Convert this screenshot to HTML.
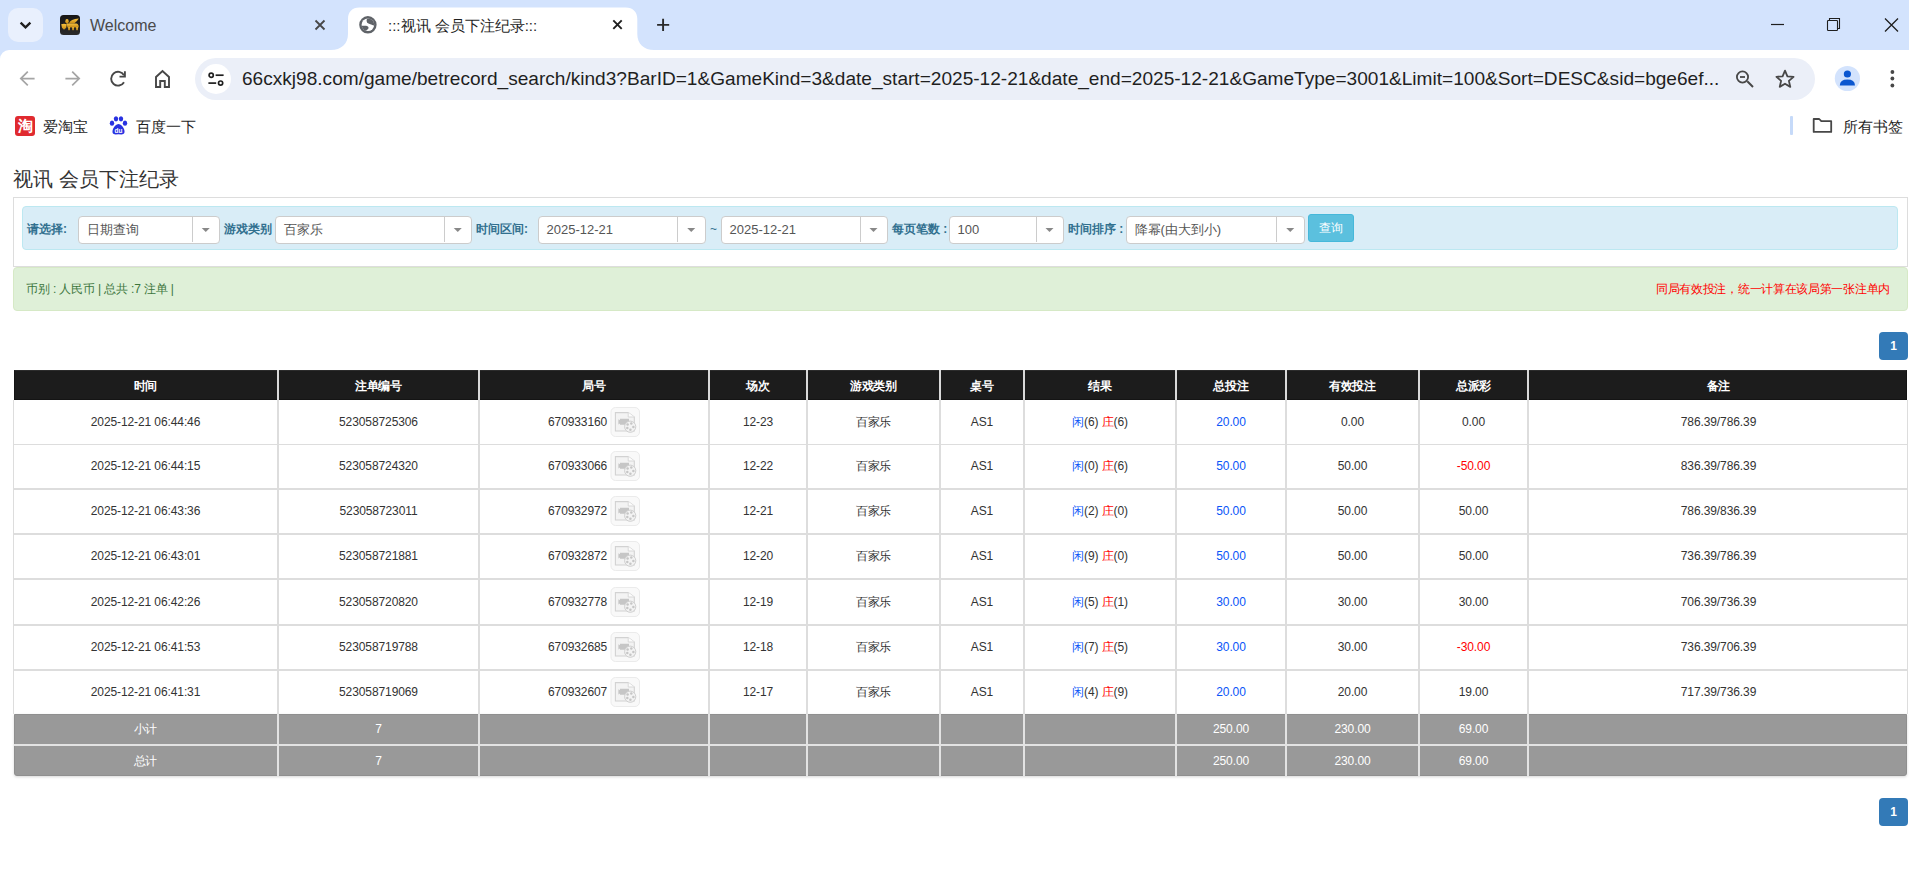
<!DOCTYPE html>
<html><head><meta charset="utf-8"><title>:::视讯 会员下注纪录:::</title>
<style>
*{box-sizing:border-box;margin:0;padding:0}
html,body{width:1909px;height:893px;overflow:hidden;background:#fff;font-family:"Liberation Sans",sans-serif;color:#333}
.a{position:absolute}
.t{position:absolute;white-space:nowrap}
svg{position:absolute;overflow:visible}
</style></head><body>

<div class="a" style="left:0;top:0;width:1909px;height:62px;background:#d3e3fd"></div>
<div class="a" style="left:8px;top:8px;width:35px;height:34px;border-radius:10px;background:#e9f0fd"></div>
<svg style="left:0;top:0" width="60" height="50"><path d="M20.6 22.6 L25.5 27.4 L30.4 22.6" fill="none" stroke="#1f1f1f" stroke-width="2.3" stroke-linecap="butt"/></svg>
<div class="a" style="left:60px;top:15px;width:20px;height:20px;border-radius:3.5px;background:linear-gradient(180deg,#161616,#2a2a2a)"></div>
<svg style="left:60px;top:15px" width="20" height="20"><defs><linearGradient id="gold" x1="0" y1="0" x2="0" y2="1"><stop offset="0" stop-color="#f7c340"/><stop offset="1" stop-color="#c78a12"/></linearGradient></defs>
<g fill="url(#gold)">
<path d="M1.2 9.2 Q4 8.2 6.8 9.2 L6.2 12.8 L4 14.8 L2 12.8 Z"/>
<ellipse cx="7" cy="6.2" rx="1.7" ry="2.3"/>
<path d="M8.8 8.6 Q10.5 4.2 18.8 3.6 Q17.2 6.4 14.2 8.4 Z"/>
<path d="M6.6 8.4 L16.5 8.6 Q19 9.6 18.6 12.4 L7.4 12.4 Z"/>
<rect x="8.2" y="12" width="1.7" height="3.2"/><rect x="12.2" y="12" width="1.7" height="3.2"/><rect x="16.2" y="12" width="1.7" height="3.2"/>
</g></svg>
<div class="t" style="left:90px;top:16px;font-size:16px;line-height:20px;color:#4a4a4a">Welcome</div>
<svg style="left:0;top:0" width="700" height="50"><path d="M315.5 20.5 L324.5 29.5 M324.5 20.5 L315.5 29.5" stroke="#474747" stroke-width="1.8"/></svg>
<svg style="left:0;top:0" width="700" height="50"><path d="M331 50 C341 50 348 44 348 34 L348 19 C348 12 352 7.4 359.5 7.4 L625.5 7.4 C633 7.4 637.3 12 637.3 19 L637.3 34 C637.3 44 644 50 654 50 Z" fill="#ffffff"/></svg>
<svg style="left:355px;top:12px" width="26" height="26" viewBox="0 0 26 26">
<defs><clipPath id="gc"><circle cx="12.9" cy="12.8" r="6.4"/></clipPath></defs>
<circle cx="12.9" cy="12.8" r="8.7" fill="#5f6368"/>
<circle cx="12.9" cy="12.8" r="6.3" fill="#ffffff"/>
<g clip-path="url(#gc)" fill="#5f6368">
<path d="M13.6 3 L13.6 4.8 Q11.4 7 11.6 9 Q11.8 11 13.5 11.6 L15.3 12.2 Q17 12.6 18 13.2 L19.6 13.8 L22 14 L22 3 Z"/>
<path d="M4 13.8 L11.2 13.8 Q13.6 14.2 13.6 15.8 Q13.6 17.4 11.8 18 Q10.9 18.5 10.9 19.5 L10.9 22 L4 22 Z"/>
</g></svg>
<div class="t" style="left:388px;top:16px;font-size:15px;line-height:20px;color:#1f1f1f">:::视讯 会员下注纪录:::</div>
<svg style="left:0;top:0" width="700" height="50"><path d="M613.3 20.3 L621.7 28.9 M621.7 20.3 L613.3 28.9" stroke="#1f1f1f" stroke-width="1.9"/></svg>
<svg style="left:0;top:0" width="700" height="50"><path d="M663.1 18.8 L663.1 30.9 M657.1 24.9 L669.2 24.9" stroke="#2a2a2a" stroke-width="1.9"/></svg>
<svg style="left:1700px;top:0" width="209" height="50">
<path d="M71 24.5 L84 24.5" stroke="#1f1f1f" stroke-width="1.2"/>
<rect x="127.5" y="20.5" width="10" height="10" rx="0.8" fill="none" stroke="#1f1f1f" stroke-width="1.1"/>
<path d="M129.5 20 L129.5 18.5 L139.5 18.5 L139.5 28.5 L138 28.5" fill="none" stroke="#1f1f1f" stroke-width="1.1"/>
<path d="M185 18.5 L198 31.5 M198 18.5 L185 31.5" stroke="#1f1f1f" stroke-width="1.3"/>
</svg>
<div class="a" style="left:0;top:50px;width:1909px;height:96px;background:#fff;border-top-left-radius:9px"></div>
<svg style="left:0;top:50px" width="200" height="56">
<path d="M34.6 28.6 L21.2 28.6 M27.8 21.6 L20.8 28.6 L27.8 35.4" fill="none" stroke="#a5a5a5" stroke-width="1.7"/>
<path d="M65.4 28.6 L78.8 28.6 M72.2 21.6 L79.2 28.6 L72.2 35.4" fill="none" stroke="#a5a5a5" stroke-width="1.7"/>
<path d="M124 32.2 A6.9 6.9 0 1 1 124 25.2" fill="none" stroke="#474747" stroke-width="1.9"/>
<path d="M124.9 21.2 L124.9 26.6 L119.5 26.6" fill="none" stroke="#474747" stroke-width="1.9"/>
<path d="M156 37 L156 27 L162.5 21 L169 27 L169 37 L164.8 37 L164.8 31 L160.2 31 L160.2 37 Z" fill="none" stroke="#474747" stroke-width="1.9" stroke-linejoin="miter"/>
</svg>
<div class="a" style="left:195px;top:58px;width:1620px;height:42px;border-radius:21px;background:#ebeff8"></div>
<div class="a" style="left:201px;top:64px;width:30px;height:30px;border-radius:15px;background:#fff"></div>
<svg style="left:201px;top:64px" width="30" height="30">
<circle cx="10.2" cy="11.2" r="2.1" fill="none" stroke="#1f1f1f" stroke-width="1.7"/>
<path d="M14.6 11.2 L22.6 11.2" stroke="#1f1f1f" stroke-width="1.7"/>
<circle cx="19.6" cy="19.1" r="2.1" fill="none" stroke="#1f1f1f" stroke-width="1.7"/>
<path d="M7.4 19.1 L15.2 19.1" stroke="#1f1f1f" stroke-width="1.7"/>
</svg>
<div class="t" id="url" style="left:242px;top:68px;font-size:19.08px;line-height:22px;color:#1f1f1f;transform-origin:0 0">66cxkj98.com/game/betrecord_search/kind3?BarID=1&amp;GameKind=3&amp;date_start=2025-12-21&amp;date_end=2025-12-21&amp;GameType=3001&amp;Limit=100&amp;Sort=DESC&amp;sid=bge6ef...</div>
<svg style="left:1700px;top:50px" width="209" height="56">
<circle cx="42.5" cy="27" r="5.6" fill="none" stroke="#474747" stroke-width="1.8"/>
<path d="M40 27 L45 27" stroke="#474747" stroke-width="1.8"/>
<path d="M47.3 31.3 L53 37" stroke="#474747" stroke-width="2"/>
<path d="M85 20.6 L87.41 26.28 L93.56 26.82 L88.9 30.87 L90.29 36.88 L85 33.7 L79.71 36.88 L81.1 30.87 L76.44 26.82 L82.59 26.28 Z" fill="none" stroke="#474747" stroke-width="1.8" stroke-linejoin="round"/>
<circle cx="147.4" cy="28.5" r="12.6" fill="#d3e3fd"/>
<circle cx="147.4" cy="24" r="3.6" fill="#0b57d0"/>
<path d="M139.8 35.5 Q140 29.6 147.4 29.6 Q154.8 29.6 155 35.5 Z" fill="#0b57d0"/>
<circle cx="192.4" cy="22" r="1.9" fill="#474747"/>
<circle cx="192.4" cy="28.5" r="1.9" fill="#474747"/>
<circle cx="192.4" cy="35.5" r="1.9" fill="#474747"/>
</svg>
<div class="a" style="left:15px;top:116px;width:20px;height:20px;border-radius:3px;background:#e02a2f"></div>
<div class="t" style="left:15px;top:116px;width:20px;height:20px;font-size:15px;line-height:20px;text-align:center;color:#fff;font-weight:bold">淘</div>
<div class="t" style="left:43px;top:116.5px;font-size:14.5px;letter-spacing:0.1px;line-height:20px;color:#1f1f1f">爱淘宝</div>
<svg style="left:108px;top:115px" width="20" height="22">
<ellipse cx="4" cy="8.2" rx="2.2" ry="2.6" fill="#2932e1"/>
<ellipse cx="8" cy="3.8" rx="2.2" ry="2.6" fill="#2932e1"/>
<ellipse cx="13" cy="3.8" rx="2.2" ry="2.6" fill="#2932e1"/>
<ellipse cx="17" cy="8.2" rx="2.2" ry="2.6" fill="#2932e1"/>
<path d="M10.5 9 Q14 9.5 16 14 Q18 19 13.5 19.5 Q10.5 19 7.5 19.5 Q3 19 5 14 Q7 9.5 10.5 9Z" fill="#2932e1"/>
<text x="10.5" y="18.2" font-size="6.5" font-family="Liberation Sans" font-weight="bold" fill="#fff" text-anchor="middle">du</text>
</svg>
<div class="t" style="left:135.5px;top:116.5px;font-size:14.5px;letter-spacing:0.1px;line-height:20px;color:#1f1f1f">百度一下</div>
<div class="a" style="left:1790px;top:116px;width:2.5px;height:19px;background:#c6daf9;border-radius:1px"></div>
<svg style="left:1810px;top:115px" width="26" height="22">
<path d="M3.7 4 L9.2 4 L11.3 6.2 L21.2 6.2 L21.2 16.9 L3.7 16.9 Z" fill="none" stroke="#474747" stroke-width="1.8" stroke-linejoin="round"/>
</svg>
<div class="t" style="left:1843px;top:116.5px;font-size:14.5px;letter-spacing:0.1px;line-height:20px;color:#1f1f1f">所有书签</div>
<div class="t" style="left:13px;top:167px;font-size:20px;line-height:24px;color:#333">视讯 会员下注纪录</div>
<div class="a" style="left:13px;top:197px;width:1895px;height:70px;border:1px solid #dddddd;background:#fff"></div>
<div class="a" style="left:22px;top:206px;width:1876px;height:44px;border:1px solid #bce8f1;border-radius:4px;background:#d9edf7"></div>
<div class="t" style="left:27px;top:221px;font-size:12px;font-weight:bold;color:#31708f;line-height:16px">请选择:</div>
<div class="a" style="left:77.5px;top:216px;width:142.0px;height:27.5px;border:1px solid #cccccc;border-radius:4px;background:#fff"></div>
<div class="a" style="left:192px;top:217px;width:1px;height:25px;background:#cccccc"></div>
<svg style="left:0;top:0" width="1" height="1"><path d="M201.75 228 L209.75 228 L205.75 232 Z" fill="#888"/></svg>
<div class="t" style="left:86.5px;top:222px;font-size:13px;line-height:16px;color:#555">日期查询</div>
<div class="t" style="left:223.5px;top:221px;font-size:12px;font-weight:bold;color:#31708f;line-height:16px">游戏类别</div>
<div class="a" style="left:274.5px;top:216px;width:197.0px;height:27.5px;border:1px solid #cccccc;border-radius:4px;background:#fff"></div>
<div class="a" style="left:444px;top:217px;width:1px;height:25px;background:#cccccc"></div>
<svg style="left:0;top:0" width="1" height="1"><path d="M453.75 228 L461.75 228 L457.75 232 Z" fill="#888"/></svg>
<div class="t" style="left:283.5px;top:222px;font-size:13px;line-height:16px;color:#555">百家乐</div>
<div class="t" style="left:476px;top:221px;font-size:12px;font-weight:bold;color:#31708f;line-height:16px">时间区间:</div>
<div class="a" style="left:537.5px;top:216px;width:168.0px;height:27.5px;border:1px solid #cccccc;border-radius:4px;background:#fff"></div>
<div class="a" style="left:677px;top:217px;width:1px;height:25px;background:#cccccc"></div>
<svg style="left:0;top:0" width="1" height="1"><path d="M687.25 228 L695.25 228 L691.25 232 Z" fill="#888"/></svg>
<div class="t" style="left:546.5px;top:222px;font-size:13px;line-height:16px;color:#555">2025-12-21</div>
<div class="t" style="left:710px;top:221px;font-size:12px;line-height:16px;color:#31708f">~</div>
<div class="a" style="left:720.5px;top:216px;width:167.0px;height:27.5px;border:1px solid #cccccc;border-radius:4px;background:#fff"></div>
<div class="a" style="left:859.5px;top:217px;width:1px;height:25px;background:#cccccc"></div>
<svg style="left:0;top:0" width="1" height="1"><path d="M869.5 228 L877.5 228 L873.5 232 Z" fill="#888"/></svg>
<div class="t" style="left:729.5px;top:222px;font-size:13px;line-height:16px;color:#555">2025-12-21</div>
<div class="t" style="left:892px;top:221px;font-size:12px;font-weight:bold;color:#31708f;line-height:16px">每页笔数 :</div>
<div class="a" style="left:948.5px;top:216px;width:115.0px;height:27.5px;border:1px solid #cccccc;border-radius:4px;background:#fff"></div>
<div class="a" style="left:1035.5px;top:217px;width:1px;height:25px;background:#cccccc"></div>
<svg style="left:0;top:0" width="1" height="1"><path d="M1045.5 228 L1053.5 228 L1049.5 232 Z" fill="#888"/></svg>
<div class="t" style="left:957.5px;top:222px;font-size:13px;line-height:16px;color:#555">100</div>
<div class="t" style="left:1068px;top:221px;font-size:12px;font-weight:bold;color:#31708f;line-height:16px">时间排序 :</div>
<div class="a" style="left:1125.5px;top:216px;width:179.0px;height:27.5px;border:1px solid #cccccc;border-radius:4px;background:#fff"></div>
<div class="a" style="left:1276px;top:217px;width:1px;height:25px;background:#cccccc"></div>
<svg style="left:0;top:0" width="1" height="1"><path d="M1286.25 228 L1294.25 228 L1290.25 232 Z" fill="#888"/></svg>
<div class="t" style="left:1134.5px;top:222px;font-size:13px;line-height:16px;color:#555">降幂(由大到小)</div>
<div class="a" style="left:1308px;top:214px;width:46px;height:28px;border:1px solid #46b8da;border-radius:3px;background:#5bc0de"></div>
<div class="t" style="left:1308px;top:220px;width:46px;text-align:center;font-size:12px;line-height:16px;color:#fff">查询</div>
<div class="a" style="left:13px;top:267px;width:1895px;height:44px;border:1px solid #d6e9c6;border-radius:4px;background:#dff0d8"></div>
<div class="t" style="left:26px;top:281px;font-size:12px;letter-spacing:-0.15px;line-height:16px;color:#3c763d">币别 : 人民币 | 总共 :7 注单 |</div>
<div class="t" style="right:19px;top:281px;font-size:12px;letter-spacing:-0.3px;line-height:16px;color:#ff0000">同局有效投注，统一计算在该局第一张注单内</div>
<div class="a" style="left:1879px;top:332px;width:29px;height:28px;border-radius:4px;background:#337ab7"></div>
<div class="t" style="left:1879px;top:338px;width:29px;text-align:center;font-size:12px;font-weight:bold;line-height:16px;color:#fff">1</div>
<div class="a" style="left:1879px;top:798px;width:29px;height:28px;border-radius:4px;background:#337ab7"></div>
<div class="t" style="left:1879px;top:804px;width:29px;text-align:center;font-size:12px;font-weight:bold;line-height:16px;color:#fff">1</div>
<div class="a" style="left:13px;top:370px;width:1895px;height:344px;background:#fff"></div>
<div class="a" style="left:14px;top:370px;width:1893px;height:30px;background:#1c1c1c;border:1px solid #141414;border-top-color:#2c2c2c"></div>
<div class="a" style="left:14px;top:714px;width:1893px;height:62px;background:#999999;border:1px solid #8f8f8f;border-radius:0 0 3px 3px;box-shadow:0 1px 3px rgba(0,0,0,.16)"></div>
<div class="a" style="left:14px;top:744px;width:1893px;height:2px;background:#e3e3e3"></div>
<div class="a" style="left:13px;top:444px;width:1895px;height:1px;background:#dddddd"></div>
<div class="a" style="left:13px;top:488px;width:1895px;height:2px;background:#dddddd"></div>
<div class="a" style="left:13px;top:533px;width:1895px;height:2px;background:#dddddd"></div>
<div class="a" style="left:13px;top:578px;width:1895px;height:2px;background:#dddddd"></div>
<div class="a" style="left:13px;top:624px;width:1895px;height:2px;background:#dddddd"></div>
<div class="a" style="left:13px;top:669px;width:1895px;height:2px;background:#dddddd"></div>
<div class="a" style="left:13px;top:400px;width:1px;height:314px;background:#dddddd"></div>
<div class="a" style="left:1907px;top:400px;width:1px;height:314px;background:#dddddd"></div>
<div class="a" style="left:277px;top:370px;width:2px;height:30px;background:#d9d9d9"></div>
<div class="a" style="left:277px;top:400px;width:2px;height:314px;background:#dddddd"></div>
<div class="a" style="left:277px;top:714px;width:2px;height:62px;background:#e3e3e3"></div>
<div class="a" style="left:478px;top:370px;width:2px;height:30px;background:#d9d9d9"></div>
<div class="a" style="left:478px;top:400px;width:2px;height:314px;background:#dddddd"></div>
<div class="a" style="left:478px;top:714px;width:2px;height:62px;background:#e3e3e3"></div>
<div class="a" style="left:708px;top:370px;width:2px;height:30px;background:#d9d9d9"></div>
<div class="a" style="left:708px;top:400px;width:2px;height:314px;background:#dddddd"></div>
<div class="a" style="left:708px;top:714px;width:2px;height:62px;background:#e3e3e3"></div>
<div class="a" style="left:806px;top:370px;width:2px;height:30px;background:#d9d9d9"></div>
<div class="a" style="left:806px;top:400px;width:2px;height:314px;background:#dddddd"></div>
<div class="a" style="left:806px;top:714px;width:2px;height:62px;background:#e3e3e3"></div>
<div class="a" style="left:939px;top:370px;width:2px;height:30px;background:#d9d9d9"></div>
<div class="a" style="left:939px;top:400px;width:2px;height:314px;background:#dddddd"></div>
<div class="a" style="left:939px;top:714px;width:2px;height:62px;background:#e3e3e3"></div>
<div class="a" style="left:1023px;top:370px;width:2px;height:30px;background:#d9d9d9"></div>
<div class="a" style="left:1023px;top:400px;width:2px;height:314px;background:#dddddd"></div>
<div class="a" style="left:1023px;top:714px;width:2px;height:62px;background:#e3e3e3"></div>
<div class="a" style="left:1175px;top:370px;width:2px;height:30px;background:#d9d9d9"></div>
<div class="a" style="left:1175px;top:400px;width:2px;height:314px;background:#dddddd"></div>
<div class="a" style="left:1175px;top:714px;width:2px;height:62px;background:#e3e3e3"></div>
<div class="a" style="left:1285px;top:370px;width:2px;height:30px;background:#d9d9d9"></div>
<div class="a" style="left:1285px;top:400px;width:2px;height:314px;background:#dddddd"></div>
<div class="a" style="left:1285px;top:714px;width:2px;height:62px;background:#e3e3e3"></div>
<div class="a" style="left:1418px;top:370px;width:2px;height:30px;background:#d9d9d9"></div>
<div class="a" style="left:1418px;top:400px;width:2px;height:314px;background:#dddddd"></div>
<div class="a" style="left:1418px;top:714px;width:2px;height:62px;background:#e3e3e3"></div>
<div class="a" style="left:1527px;top:370px;width:2px;height:30px;background:#d9d9d9"></div>
<div class="a" style="left:1527px;top:400px;width:2px;height:314px;background:#dddddd"></div>
<div class="a" style="left:1527px;top:714px;width:2px;height:62px;background:#e3e3e3"></div>
<div class="t" style="left:14px;top:378px;width:263px;text-align:center;font-size:12px;letter-spacing:-0.1px;line-height:16px;color:#fff;font-weight:bold">时间</div>
<div class="t" style="left:279px;top:378px;width:199px;text-align:center;font-size:12px;letter-spacing:-0.1px;line-height:16px;color:#fff;font-weight:bold">注单编号</div>
<div class="t" style="left:480px;top:378px;width:228px;text-align:center;font-size:12px;letter-spacing:-0.1px;line-height:16px;color:#fff;font-weight:bold">局号</div>
<div class="t" style="left:710px;top:378px;width:96px;text-align:center;font-size:12px;letter-spacing:-0.1px;line-height:16px;color:#fff;font-weight:bold">场次</div>
<div class="t" style="left:808px;top:378px;width:131px;text-align:center;font-size:12px;letter-spacing:-0.1px;line-height:16px;color:#fff;font-weight:bold">游戏类别</div>
<div class="t" style="left:941px;top:378px;width:82px;text-align:center;font-size:12px;letter-spacing:-0.1px;line-height:16px;color:#fff;font-weight:bold">桌号</div>
<div class="t" style="left:1025px;top:378px;width:150px;text-align:center;font-size:12px;letter-spacing:-0.1px;line-height:16px;color:#fff;font-weight:bold">结果</div>
<div class="t" style="left:1177px;top:378px;width:108px;text-align:center;font-size:12px;letter-spacing:-0.1px;line-height:16px;color:#fff;font-weight:bold">总投注</div>
<div class="t" style="left:1287px;top:378px;width:131px;text-align:center;font-size:12px;letter-spacing:-0.1px;line-height:16px;color:#fff;font-weight:bold">有效投注</div>
<div class="t" style="left:1420px;top:378px;width:107px;text-align:center;font-size:12px;letter-spacing:-0.1px;line-height:16px;color:#fff;font-weight:bold">总派彩</div>
<div class="t" style="left:1529px;top:378px;width:379px;text-align:center;font-size:12px;letter-spacing:-0.1px;line-height:16px;color:#fff;font-weight:bold">备注</div>
<div class="t" style="left:14px;top:414px;width:263px;text-align:center;font-size:12px;letter-spacing:-0.1px;line-height:16px;">2025-12-21 06:44:46</div>
<div class="t" style="left:279px;top:414px;width:199px;text-align:center;font-size:12px;letter-spacing:-0.1px;line-height:16px;">523058725306</div>
<div class="t" style="left:548px;top:414px;font-size:12px;letter-spacing:-0.1px;line-height:16px">670933160</div>
<div class="a" style="left:611px;top:407px;width:30px;height:30px"><svg width="30" height="30" viewBox="0 0 30 30" style="left:0;top:0">
<rect x="0" y="0.5" width="28.5" height="29" rx="4.5" fill="#f9f9f9" stroke="#ebebeb" stroke-width="1"/>
<path d="M4.4 5.6 L17.2 5.6 L23.3 10 L23.3 24 L4.4 24 Z" fill="#f3f3f3" stroke="#d2d2d2" stroke-width="1.1"/>
<path d="M17.2 5.6 L17.2 10 L23.3 10" fill="#fcfcfc" stroke="#d8d8d8" stroke-width="1"/>
<path d="M7.4 12.3 L9 13.3 L9 11.8 L18 11.8 L18 17.8 L9 17.8 L9 16.6 L7.4 17.6 Z" fill="#c6c6c6"/>
<circle cx="19.2" cy="19.7" r="5.6" fill="#f3f3f3" stroke="#cfcfcf" stroke-width="1"/>
<circle cx="16.6" cy="17.6" r="1.25" fill="#c6c6c6"/><circle cx="20.3" cy="16.5" r="1.25" fill="#c6c6c6"/>
<circle cx="22.4" cy="19.9" r="1.25" fill="#c6c6c6"/><circle cx="19.4" cy="22.7" r="1.25" fill="#c6c6c6"/><circle cx="16.3" cy="20.9" r="1.25" fill="#c6c6c6"/>
</svg></div>
<div class="t" style="left:710px;top:414px;width:96px;text-align:center;font-size:12px;letter-spacing:-0.1px;line-height:16px;">12-23</div>
<div class="t" style="left:808px;top:414px;width:131px;text-align:center;font-size:12px;letter-spacing:-0.1px;line-height:16px;">百家乐</div>
<div class="t" style="left:941px;top:414px;width:82px;text-align:center;font-size:12px;letter-spacing:-0.1px;line-height:16px;">AS1</div>
<div class="t" style="left:1025px;top:414px;width:150px;text-align:center;font-size:12px;letter-spacing:-0.1px;line-height:16px;"><span style="color:#0a55f8">闲</span>(6) <span style="color:#ff0000">庄</span>(6)</div>
<div class="t" style="left:1177px;top:414px;width:108px;text-align:center;font-size:12px;letter-spacing:-0.1px;line-height:16px;color:#0a55f8">20.00</div>
<div class="t" style="left:1287px;top:414px;width:131px;text-align:center;font-size:12px;letter-spacing:-0.1px;line-height:16px;">0.00</div>
<div class="t" style="left:1420px;top:414px;width:107px;text-align:center;font-size:12px;letter-spacing:-0.1px;line-height:16px;">0.00</div>
<div class="t" style="left:1529px;top:414px;width:379px;text-align:center;font-size:12px;letter-spacing:-0.1px;line-height:16px;">786.39/786.39</div>
<div class="t" style="left:14px;top:458px;width:263px;text-align:center;font-size:12px;letter-spacing:-0.1px;line-height:16px;">2025-12-21 06:44:15</div>
<div class="t" style="left:279px;top:458px;width:199px;text-align:center;font-size:12px;letter-spacing:-0.1px;line-height:16px;">523058724320</div>
<div class="t" style="left:548px;top:458px;font-size:12px;letter-spacing:-0.1px;line-height:16px">670933066</div>
<div class="a" style="left:611px;top:451px;width:30px;height:30px"><svg width="30" height="30" viewBox="0 0 30 30" style="left:0;top:0">
<rect x="0" y="0.5" width="28.5" height="29" rx="4.5" fill="#f9f9f9" stroke="#ebebeb" stroke-width="1"/>
<path d="M4.4 5.6 L17.2 5.6 L23.3 10 L23.3 24 L4.4 24 Z" fill="#f3f3f3" stroke="#d2d2d2" stroke-width="1.1"/>
<path d="M17.2 5.6 L17.2 10 L23.3 10" fill="#fcfcfc" stroke="#d8d8d8" stroke-width="1"/>
<path d="M7.4 12.3 L9 13.3 L9 11.8 L18 11.8 L18 17.8 L9 17.8 L9 16.6 L7.4 17.6 Z" fill="#c6c6c6"/>
<circle cx="19.2" cy="19.7" r="5.6" fill="#f3f3f3" stroke="#cfcfcf" stroke-width="1"/>
<circle cx="16.6" cy="17.6" r="1.25" fill="#c6c6c6"/><circle cx="20.3" cy="16.5" r="1.25" fill="#c6c6c6"/>
<circle cx="22.4" cy="19.9" r="1.25" fill="#c6c6c6"/><circle cx="19.4" cy="22.7" r="1.25" fill="#c6c6c6"/><circle cx="16.3" cy="20.9" r="1.25" fill="#c6c6c6"/>
</svg></div>
<div class="t" style="left:710px;top:458px;width:96px;text-align:center;font-size:12px;letter-spacing:-0.1px;line-height:16px;">12-22</div>
<div class="t" style="left:808px;top:458px;width:131px;text-align:center;font-size:12px;letter-spacing:-0.1px;line-height:16px;">百家乐</div>
<div class="t" style="left:941px;top:458px;width:82px;text-align:center;font-size:12px;letter-spacing:-0.1px;line-height:16px;">AS1</div>
<div class="t" style="left:1025px;top:458px;width:150px;text-align:center;font-size:12px;letter-spacing:-0.1px;line-height:16px;"><span style="color:#0a55f8">闲</span>(0) <span style="color:#ff0000">庄</span>(6)</div>
<div class="t" style="left:1177px;top:458px;width:108px;text-align:center;font-size:12px;letter-spacing:-0.1px;line-height:16px;color:#0a55f8">50.00</div>
<div class="t" style="left:1287px;top:458px;width:131px;text-align:center;font-size:12px;letter-spacing:-0.1px;line-height:16px;">50.00</div>
<div class="t" style="left:1420px;top:458px;width:107px;text-align:center;font-size:12px;letter-spacing:-0.1px;line-height:16px;color:#ff0000">-50.00</div>
<div class="t" style="left:1529px;top:458px;width:379px;text-align:center;font-size:12px;letter-spacing:-0.1px;line-height:16px;">836.39/786.39</div>
<div class="t" style="left:14px;top:503px;width:263px;text-align:center;font-size:12px;letter-spacing:-0.1px;line-height:16px;">2025-12-21 06:43:36</div>
<div class="t" style="left:279px;top:503px;width:199px;text-align:center;font-size:12px;letter-spacing:-0.1px;line-height:16px;">523058723011</div>
<div class="t" style="left:548px;top:503px;font-size:12px;letter-spacing:-0.1px;line-height:16px">670932972</div>
<div class="a" style="left:611px;top:496px;width:30px;height:30px"><svg width="30" height="30" viewBox="0 0 30 30" style="left:0;top:0">
<rect x="0" y="0.5" width="28.5" height="29" rx="4.5" fill="#f9f9f9" stroke="#ebebeb" stroke-width="1"/>
<path d="M4.4 5.6 L17.2 5.6 L23.3 10 L23.3 24 L4.4 24 Z" fill="#f3f3f3" stroke="#d2d2d2" stroke-width="1.1"/>
<path d="M17.2 5.6 L17.2 10 L23.3 10" fill="#fcfcfc" stroke="#d8d8d8" stroke-width="1"/>
<path d="M7.4 12.3 L9 13.3 L9 11.8 L18 11.8 L18 17.8 L9 17.8 L9 16.6 L7.4 17.6 Z" fill="#c6c6c6"/>
<circle cx="19.2" cy="19.7" r="5.6" fill="#f3f3f3" stroke="#cfcfcf" stroke-width="1"/>
<circle cx="16.6" cy="17.6" r="1.25" fill="#c6c6c6"/><circle cx="20.3" cy="16.5" r="1.25" fill="#c6c6c6"/>
<circle cx="22.4" cy="19.9" r="1.25" fill="#c6c6c6"/><circle cx="19.4" cy="22.7" r="1.25" fill="#c6c6c6"/><circle cx="16.3" cy="20.9" r="1.25" fill="#c6c6c6"/>
</svg></div>
<div class="t" style="left:710px;top:503px;width:96px;text-align:center;font-size:12px;letter-spacing:-0.1px;line-height:16px;">12-21</div>
<div class="t" style="left:808px;top:503px;width:131px;text-align:center;font-size:12px;letter-spacing:-0.1px;line-height:16px;">百家乐</div>
<div class="t" style="left:941px;top:503px;width:82px;text-align:center;font-size:12px;letter-spacing:-0.1px;line-height:16px;">AS1</div>
<div class="t" style="left:1025px;top:503px;width:150px;text-align:center;font-size:12px;letter-spacing:-0.1px;line-height:16px;"><span style="color:#0a55f8">闲</span>(2) <span style="color:#ff0000">庄</span>(0)</div>
<div class="t" style="left:1177px;top:503px;width:108px;text-align:center;font-size:12px;letter-spacing:-0.1px;line-height:16px;color:#0a55f8">50.00</div>
<div class="t" style="left:1287px;top:503px;width:131px;text-align:center;font-size:12px;letter-spacing:-0.1px;line-height:16px;">50.00</div>
<div class="t" style="left:1420px;top:503px;width:107px;text-align:center;font-size:12px;letter-spacing:-0.1px;line-height:16px;">50.00</div>
<div class="t" style="left:1529px;top:503px;width:379px;text-align:center;font-size:12px;letter-spacing:-0.1px;line-height:16px;">786.39/836.39</div>
<div class="t" style="left:14px;top:548px;width:263px;text-align:center;font-size:12px;letter-spacing:-0.1px;line-height:16px;">2025-12-21 06:43:01</div>
<div class="t" style="left:279px;top:548px;width:199px;text-align:center;font-size:12px;letter-spacing:-0.1px;line-height:16px;">523058721881</div>
<div class="t" style="left:548px;top:548px;font-size:12px;letter-spacing:-0.1px;line-height:16px">670932872</div>
<div class="a" style="left:611px;top:541px;width:30px;height:30px"><svg width="30" height="30" viewBox="0 0 30 30" style="left:0;top:0">
<rect x="0" y="0.5" width="28.5" height="29" rx="4.5" fill="#f9f9f9" stroke="#ebebeb" stroke-width="1"/>
<path d="M4.4 5.6 L17.2 5.6 L23.3 10 L23.3 24 L4.4 24 Z" fill="#f3f3f3" stroke="#d2d2d2" stroke-width="1.1"/>
<path d="M17.2 5.6 L17.2 10 L23.3 10" fill="#fcfcfc" stroke="#d8d8d8" stroke-width="1"/>
<path d="M7.4 12.3 L9 13.3 L9 11.8 L18 11.8 L18 17.8 L9 17.8 L9 16.6 L7.4 17.6 Z" fill="#c6c6c6"/>
<circle cx="19.2" cy="19.7" r="5.6" fill="#f3f3f3" stroke="#cfcfcf" stroke-width="1"/>
<circle cx="16.6" cy="17.6" r="1.25" fill="#c6c6c6"/><circle cx="20.3" cy="16.5" r="1.25" fill="#c6c6c6"/>
<circle cx="22.4" cy="19.9" r="1.25" fill="#c6c6c6"/><circle cx="19.4" cy="22.7" r="1.25" fill="#c6c6c6"/><circle cx="16.3" cy="20.9" r="1.25" fill="#c6c6c6"/>
</svg></div>
<div class="t" style="left:710px;top:548px;width:96px;text-align:center;font-size:12px;letter-spacing:-0.1px;line-height:16px;">12-20</div>
<div class="t" style="left:808px;top:548px;width:131px;text-align:center;font-size:12px;letter-spacing:-0.1px;line-height:16px;">百家乐</div>
<div class="t" style="left:941px;top:548px;width:82px;text-align:center;font-size:12px;letter-spacing:-0.1px;line-height:16px;">AS1</div>
<div class="t" style="left:1025px;top:548px;width:150px;text-align:center;font-size:12px;letter-spacing:-0.1px;line-height:16px;"><span style="color:#0a55f8">闲</span>(9) <span style="color:#ff0000">庄</span>(0)</div>
<div class="t" style="left:1177px;top:548px;width:108px;text-align:center;font-size:12px;letter-spacing:-0.1px;line-height:16px;color:#0a55f8">50.00</div>
<div class="t" style="left:1287px;top:548px;width:131px;text-align:center;font-size:12px;letter-spacing:-0.1px;line-height:16px;">50.00</div>
<div class="t" style="left:1420px;top:548px;width:107px;text-align:center;font-size:12px;letter-spacing:-0.1px;line-height:16px;">50.00</div>
<div class="t" style="left:1529px;top:548px;width:379px;text-align:center;font-size:12px;letter-spacing:-0.1px;line-height:16px;">736.39/786.39</div>
<div class="t" style="left:14px;top:594px;width:263px;text-align:center;font-size:12px;letter-spacing:-0.1px;line-height:16px;">2025-12-21 06:42:26</div>
<div class="t" style="left:279px;top:594px;width:199px;text-align:center;font-size:12px;letter-spacing:-0.1px;line-height:16px;">523058720820</div>
<div class="t" style="left:548px;top:594px;font-size:12px;letter-spacing:-0.1px;line-height:16px">670932778</div>
<div class="a" style="left:611px;top:587px;width:30px;height:30px"><svg width="30" height="30" viewBox="0 0 30 30" style="left:0;top:0">
<rect x="0" y="0.5" width="28.5" height="29" rx="4.5" fill="#f9f9f9" stroke="#ebebeb" stroke-width="1"/>
<path d="M4.4 5.6 L17.2 5.6 L23.3 10 L23.3 24 L4.4 24 Z" fill="#f3f3f3" stroke="#d2d2d2" stroke-width="1.1"/>
<path d="M17.2 5.6 L17.2 10 L23.3 10" fill="#fcfcfc" stroke="#d8d8d8" stroke-width="1"/>
<path d="M7.4 12.3 L9 13.3 L9 11.8 L18 11.8 L18 17.8 L9 17.8 L9 16.6 L7.4 17.6 Z" fill="#c6c6c6"/>
<circle cx="19.2" cy="19.7" r="5.6" fill="#f3f3f3" stroke="#cfcfcf" stroke-width="1"/>
<circle cx="16.6" cy="17.6" r="1.25" fill="#c6c6c6"/><circle cx="20.3" cy="16.5" r="1.25" fill="#c6c6c6"/>
<circle cx="22.4" cy="19.9" r="1.25" fill="#c6c6c6"/><circle cx="19.4" cy="22.7" r="1.25" fill="#c6c6c6"/><circle cx="16.3" cy="20.9" r="1.25" fill="#c6c6c6"/>
</svg></div>
<div class="t" style="left:710px;top:594px;width:96px;text-align:center;font-size:12px;letter-spacing:-0.1px;line-height:16px;">12-19</div>
<div class="t" style="left:808px;top:594px;width:131px;text-align:center;font-size:12px;letter-spacing:-0.1px;line-height:16px;">百家乐</div>
<div class="t" style="left:941px;top:594px;width:82px;text-align:center;font-size:12px;letter-spacing:-0.1px;line-height:16px;">AS1</div>
<div class="t" style="left:1025px;top:594px;width:150px;text-align:center;font-size:12px;letter-spacing:-0.1px;line-height:16px;"><span style="color:#0a55f8">闲</span>(5) <span style="color:#ff0000">庄</span>(1)</div>
<div class="t" style="left:1177px;top:594px;width:108px;text-align:center;font-size:12px;letter-spacing:-0.1px;line-height:16px;color:#0a55f8">30.00</div>
<div class="t" style="left:1287px;top:594px;width:131px;text-align:center;font-size:12px;letter-spacing:-0.1px;line-height:16px;">30.00</div>
<div class="t" style="left:1420px;top:594px;width:107px;text-align:center;font-size:12px;letter-spacing:-0.1px;line-height:16px;">30.00</div>
<div class="t" style="left:1529px;top:594px;width:379px;text-align:center;font-size:12px;letter-spacing:-0.1px;line-height:16px;">706.39/736.39</div>
<div class="t" style="left:14px;top:639px;width:263px;text-align:center;font-size:12px;letter-spacing:-0.1px;line-height:16px;">2025-12-21 06:41:53</div>
<div class="t" style="left:279px;top:639px;width:199px;text-align:center;font-size:12px;letter-spacing:-0.1px;line-height:16px;">523058719788</div>
<div class="t" style="left:548px;top:639px;font-size:12px;letter-spacing:-0.1px;line-height:16px">670932685</div>
<div class="a" style="left:611px;top:632px;width:30px;height:30px"><svg width="30" height="30" viewBox="0 0 30 30" style="left:0;top:0">
<rect x="0" y="0.5" width="28.5" height="29" rx="4.5" fill="#f9f9f9" stroke="#ebebeb" stroke-width="1"/>
<path d="M4.4 5.6 L17.2 5.6 L23.3 10 L23.3 24 L4.4 24 Z" fill="#f3f3f3" stroke="#d2d2d2" stroke-width="1.1"/>
<path d="M17.2 5.6 L17.2 10 L23.3 10" fill="#fcfcfc" stroke="#d8d8d8" stroke-width="1"/>
<path d="M7.4 12.3 L9 13.3 L9 11.8 L18 11.8 L18 17.8 L9 17.8 L9 16.6 L7.4 17.6 Z" fill="#c6c6c6"/>
<circle cx="19.2" cy="19.7" r="5.6" fill="#f3f3f3" stroke="#cfcfcf" stroke-width="1"/>
<circle cx="16.6" cy="17.6" r="1.25" fill="#c6c6c6"/><circle cx="20.3" cy="16.5" r="1.25" fill="#c6c6c6"/>
<circle cx="22.4" cy="19.9" r="1.25" fill="#c6c6c6"/><circle cx="19.4" cy="22.7" r="1.25" fill="#c6c6c6"/><circle cx="16.3" cy="20.9" r="1.25" fill="#c6c6c6"/>
</svg></div>
<div class="t" style="left:710px;top:639px;width:96px;text-align:center;font-size:12px;letter-spacing:-0.1px;line-height:16px;">12-18</div>
<div class="t" style="left:808px;top:639px;width:131px;text-align:center;font-size:12px;letter-spacing:-0.1px;line-height:16px;">百家乐</div>
<div class="t" style="left:941px;top:639px;width:82px;text-align:center;font-size:12px;letter-spacing:-0.1px;line-height:16px;">AS1</div>
<div class="t" style="left:1025px;top:639px;width:150px;text-align:center;font-size:12px;letter-spacing:-0.1px;line-height:16px;"><span style="color:#0a55f8">闲</span>(7) <span style="color:#ff0000">庄</span>(5)</div>
<div class="t" style="left:1177px;top:639px;width:108px;text-align:center;font-size:12px;letter-spacing:-0.1px;line-height:16px;color:#0a55f8">30.00</div>
<div class="t" style="left:1287px;top:639px;width:131px;text-align:center;font-size:12px;letter-spacing:-0.1px;line-height:16px;">30.00</div>
<div class="t" style="left:1420px;top:639px;width:107px;text-align:center;font-size:12px;letter-spacing:-0.1px;line-height:16px;color:#ff0000">-30.00</div>
<div class="t" style="left:1529px;top:639px;width:379px;text-align:center;font-size:12px;letter-spacing:-0.1px;line-height:16px;">736.39/706.39</div>
<div class="t" style="left:14px;top:684px;width:263px;text-align:center;font-size:12px;letter-spacing:-0.1px;line-height:16px;">2025-12-21 06:41:31</div>
<div class="t" style="left:279px;top:684px;width:199px;text-align:center;font-size:12px;letter-spacing:-0.1px;line-height:16px;">523058719069</div>
<div class="t" style="left:548px;top:684px;font-size:12px;letter-spacing:-0.1px;line-height:16px">670932607</div>
<div class="a" style="left:611px;top:677px;width:30px;height:30px"><svg width="30" height="30" viewBox="0 0 30 30" style="left:0;top:0">
<rect x="0" y="0.5" width="28.5" height="29" rx="4.5" fill="#f9f9f9" stroke="#ebebeb" stroke-width="1"/>
<path d="M4.4 5.6 L17.2 5.6 L23.3 10 L23.3 24 L4.4 24 Z" fill="#f3f3f3" stroke="#d2d2d2" stroke-width="1.1"/>
<path d="M17.2 5.6 L17.2 10 L23.3 10" fill="#fcfcfc" stroke="#d8d8d8" stroke-width="1"/>
<path d="M7.4 12.3 L9 13.3 L9 11.8 L18 11.8 L18 17.8 L9 17.8 L9 16.6 L7.4 17.6 Z" fill="#c6c6c6"/>
<circle cx="19.2" cy="19.7" r="5.6" fill="#f3f3f3" stroke="#cfcfcf" stroke-width="1"/>
<circle cx="16.6" cy="17.6" r="1.25" fill="#c6c6c6"/><circle cx="20.3" cy="16.5" r="1.25" fill="#c6c6c6"/>
<circle cx="22.4" cy="19.9" r="1.25" fill="#c6c6c6"/><circle cx="19.4" cy="22.7" r="1.25" fill="#c6c6c6"/><circle cx="16.3" cy="20.9" r="1.25" fill="#c6c6c6"/>
</svg></div>
<div class="t" style="left:710px;top:684px;width:96px;text-align:center;font-size:12px;letter-spacing:-0.1px;line-height:16px;">12-17</div>
<div class="t" style="left:808px;top:684px;width:131px;text-align:center;font-size:12px;letter-spacing:-0.1px;line-height:16px;">百家乐</div>
<div class="t" style="left:941px;top:684px;width:82px;text-align:center;font-size:12px;letter-spacing:-0.1px;line-height:16px;">AS1</div>
<div class="t" style="left:1025px;top:684px;width:150px;text-align:center;font-size:12px;letter-spacing:-0.1px;line-height:16px;"><span style="color:#0a55f8">闲</span>(4) <span style="color:#ff0000">庄</span>(9)</div>
<div class="t" style="left:1177px;top:684px;width:108px;text-align:center;font-size:12px;letter-spacing:-0.1px;line-height:16px;color:#0a55f8">20.00</div>
<div class="t" style="left:1287px;top:684px;width:131px;text-align:center;font-size:12px;letter-spacing:-0.1px;line-height:16px;">20.00</div>
<div class="t" style="left:1420px;top:684px;width:107px;text-align:center;font-size:12px;letter-spacing:-0.1px;line-height:16px;">19.00</div>
<div class="t" style="left:1529px;top:684px;width:379px;text-align:center;font-size:12px;letter-spacing:-0.1px;line-height:16px;">717.39/736.39</div>
<div class="t" style="left:14px;top:721px;width:263px;text-align:center;font-size:12px;letter-spacing:-0.1px;line-height:16px;color:#fff">小计</div>
<div class="t" style="left:279px;top:721px;width:199px;text-align:center;font-size:12px;letter-spacing:-0.1px;line-height:16px;color:#fff">7</div>
<div class="t" style="left:1177px;top:721px;width:108px;text-align:center;font-size:12px;letter-spacing:-0.1px;line-height:16px;color:#fff">250.00</div>
<div class="t" style="left:1287px;top:721px;width:131px;text-align:center;font-size:12px;letter-spacing:-0.1px;line-height:16px;color:#fff">230.00</div>
<div class="t" style="left:1420px;top:721px;width:107px;text-align:center;font-size:12px;letter-spacing:-0.1px;line-height:16px;color:#fff">69.00</div>
<div class="t" style="left:14px;top:753px;width:263px;text-align:center;font-size:12px;letter-spacing:-0.1px;line-height:16px;color:#fff">总计</div>
<div class="t" style="left:279px;top:753px;width:199px;text-align:center;font-size:12px;letter-spacing:-0.1px;line-height:16px;color:#fff">7</div>
<div class="t" style="left:1177px;top:753px;width:108px;text-align:center;font-size:12px;letter-spacing:-0.1px;line-height:16px;color:#fff">250.00</div>
<div class="t" style="left:1287px;top:753px;width:131px;text-align:center;font-size:12px;letter-spacing:-0.1px;line-height:16px;color:#fff">230.00</div>
<div class="t" style="left:1420px;top:753px;width:107px;text-align:center;font-size:12px;letter-spacing:-0.1px;line-height:16px;color:#fff">69.00</div>
</body></html>
